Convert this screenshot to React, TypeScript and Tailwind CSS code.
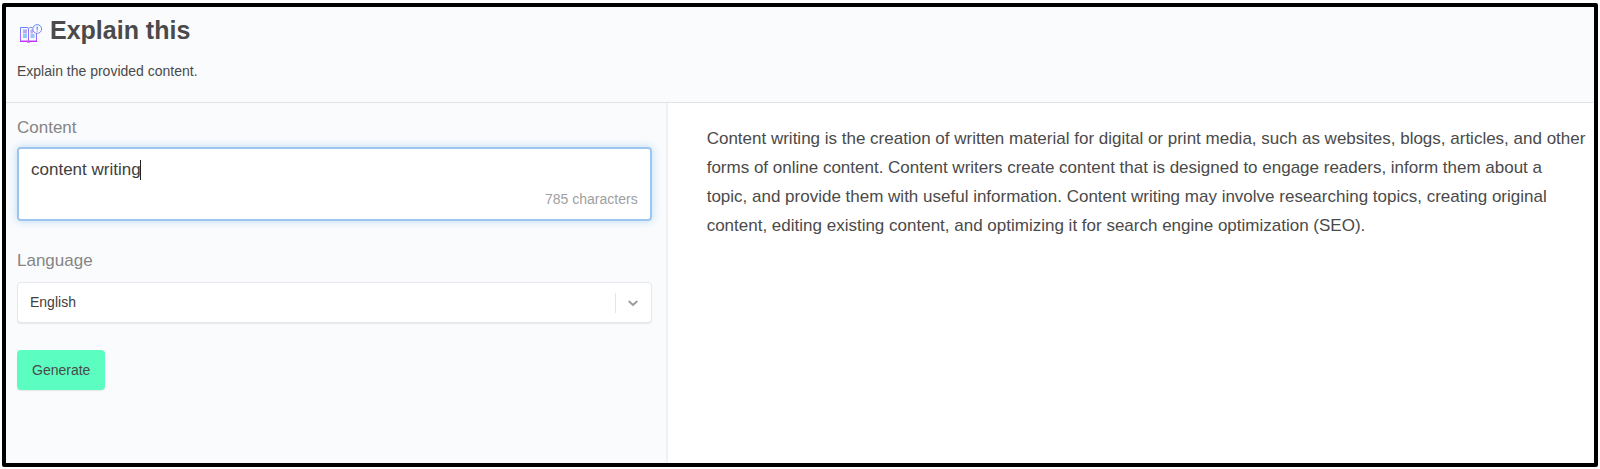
import React, { useState } from "react";

function ExplainIcon() {
  return (
    <svg viewBox="0 0 24 22" className="mt-2 h-[22px] w-6 shrink-0" fill="none" aria-hidden="true">
      <defs>
        <linearGradient id="explain-stroke" x1="0" y1="0" x2="0" y2="22" gradientUnits="userSpaceOnUse">
          <stop offset="0" stopColor="#4f8dff" />
          <stop offset="0.5" stopColor="#8878fa" />
          <stop offset="1" stopColor="#c840ff" />
        </linearGradient>
      </defs>
      <path d="M4 6.500H8V10.500H4ZM11.500 6.500H14V10.500H11.500Z" fill="#bba8f5" />
      <path d="M4 11H8V15H4ZM11.500 11H15.500V15H11.500Z" fill="#93c6fb" />
      <g stroke="url(#explain-stroke)" strokeWidth="1">
        <path d="M13.500 4.500H11.500Q10.200 4.500 9.500 5.500Q9.200 4.500 8 4.500H1.500V18H17.500V10.500" />
        <path d="M9.500 5.500V18" />
        <circle cx="18.200" cy="6" r="4.400" />
      </g>
      <path d="M1 18.500H8Q9.500 19.800 11 18.500H18" stroke="#cb2bfa" strokeWidth="1.200" />
      <path d="M18.200 3.500V6.700M18.200 7.500V8.500" stroke="#5a84f8" strokeWidth="1.200" />
    </svg>
  );
}

export default function App() {
  const [content, setContent] = useState("content writing");
  const [language, setLanguage] = useState("English");

  return (
    <div className="flex min-h-screen flex-col bg-white pt-[3px] pr-[2px] pb-[2px] pl-[2px] font-['Liberation_Sans',Arial,sans-serif] text-[#4a4a4a]">
      <div className="flex grow flex-col rounded-[2px] border-4 border-black">
        <header className="border-b border-[#e2e3e5] bg-[#fafbfd] px-[11px] pt-[5px] pb-[21px]">
          <div className="flex items-center gap-[7px] pl-[2px]">
            <ExplainIcon />
            <h1 className="text-[25px] leading-9 font-bold">Explain this</h1>
          </div>
          <p className="mt-[13px] text-[14px] leading-5">Explain the provided content.</p>
        </header>

        <main className="grid grow grid-cols-12">
          <form
            className="col-span-5 flex flex-col items-start border-r-2 border-[#f0f1f3] bg-[#fafbfd] pt-[13px] pr-[14px] pb-4 pl-[11px]"
            onSubmit={(e) => e.preventDefault()}
          >
            <label htmlFor="content" className="text-[17px] leading-6 text-[#858585]">
              Content
            </label>
            <div className="relative mt-[7px] flex w-full flex-col rounded-[4px] border-2 border-[#9cc6ee] bg-white px-3 pt-[7px] pb-[10px] shadow-[0_0_8px_rgba(120,185,240,0.5)]">
              <textarea
                id="content"
                rows={1}
                value={content}
                onChange={(e) => setContent(e.target.value)}
                className="peer block w-full resize-none overflow-hidden bg-transparent text-[17px] leading-7 text-[#404040] outline-none"
              />
              <span className="absolute top-[11px] left-[121px] h-5 w-px bg-[#222] peer-focus:hidden" aria-hidden="true" />
              <span className="self-end pt-[5px] text-[14px] leading-5 text-[#a0a0a0]">785 characters</span>
            </div>

            <label htmlFor="language" className="mt-7 text-[17px] leading-6 text-[#858585]">
              Language
            </label>
            <div className="relative mt-[9px] w-full">
              <select
                id="language"
                value={language}
                onChange={(e) => setLanguage(e.target.value)}
                className="block h-[41px] w-full appearance-none rounded-[4px] border border-[#e6e8ec] bg-white px-3 text-[14px] text-[#404040] shadow-[0_1px_1px_rgba(0,0,0,0.08)]"
              >
                <option>English</option>
              </select>
              <div className="pointer-events-none absolute inset-y-0 right-[14px] flex items-center gap-3">
                <span className="h-5 w-px bg-[#e2e6ea]" />
                <svg viewBox="0 0 10 10" className="size-[10px]" fill="none" stroke="#9a9a9a" strokeWidth="1.800" strokeLinecap="round" aria-hidden="true">
                  <path d="M1.200 3.500L5 7L8.800 3.500" />
                </svg>
              </div>
            </div>

            <button
              type="submit"
              className="mt-[27px] rounded-[4px] bg-[#5cfdc0] px-[15px] py-[10px] text-[14px] leading-5 shadow-[0_1px_1px_rgba(0,0,0,0.08)]"
            >
              Generate
            </button>
          </form>

          <section className="col-span-7 py-[21px] pr-2 pl-[39px]">
            <p className="text-[17px] leading-[29px]">
              Content writing is the creation of written material for digital or print media, such as websites, blogs,
              articles, and other forms of online content. Content writers create content that is designed to engage
              readers, inform them about a topic, and provide them with useful information. Content writing may involve
              researching topics, creating original content, editing existing content, and optimizing it for search
              engine optimization (SEO).
            </p>
          </section>
        </main>
      </div>
    </div>
  );
}
